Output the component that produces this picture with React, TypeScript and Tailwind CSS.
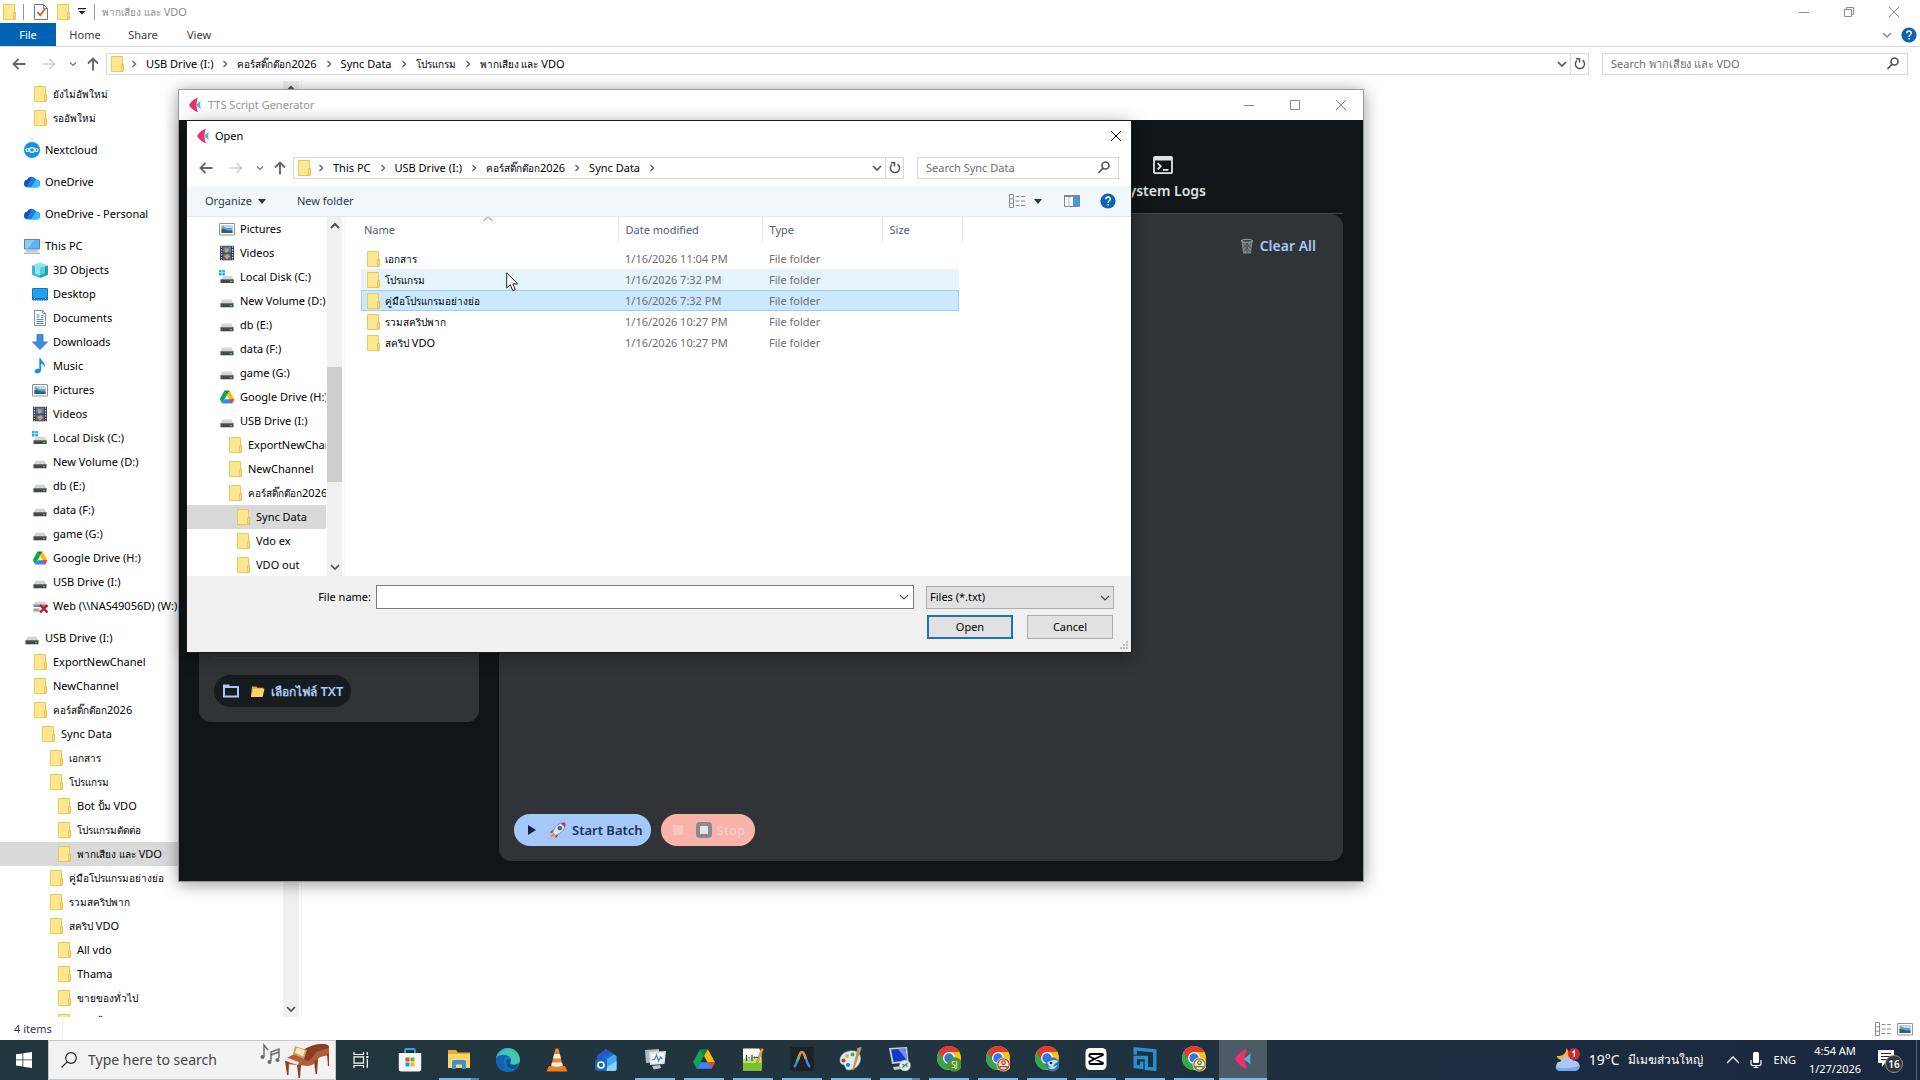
import React from "react";

/* ---------- icons ---------- */

type IconProps = { className?: string };

const Folder = ({ className = "size-4" }: IconProps) => (
  <svg viewBox="0 0 16 16" className={className} aria-hidden="true">
    <path d="M2.500.500h11v15h-11z" fill="#fde891" stroke="#e9c95c" strokeWidth="1" />
    <path d="M12.700 8.500h1.900v6.600h-1.900z" fill="#fbe07a" stroke="#dcb943" strokeWidth=".8" />
  </svg>
);

const Drive = ({ className = "size-4" }: IconProps) => (
  <svg viewBox="0 0 16 16" className={className} aria-hidden="true">
    <path d="M3.500 6.500h9l2 4h-13z" fill="#d3d5d6" />
    <path d="M1.500 10.300h13v4h-13z" fill="#45494b" />
    <path d="M1.500 10.300h13v.8h-13z" fill="#6d7173" />
    <path d="M11 12h1.800v1.200H11z" fill="#4be04b" />
  </svg>
);

const LocalDisk = () => (
  <svg viewBox="0 0 16 16" className="size-4" aria-hidden="true">
    <path d="M0 1h2.600v2.400H0zM3.300 1h2.600v2.400H3.300zM0 4.100h2.600v2.400H0zM3.300 4.100h2.600v2.400H3.300z" fill="#1fb0e6" />
    <path d="M4 7h9l1.700 3.500H2z" fill="#d3d5d6" />
    <path d="M1.500 10.300h13.200v3.700H1.500z" fill="#45494b" />
    <path d="M11 11.700h1.800v1.200H11z" fill="#4be04b" />
  </svg>
);

const NetDrive = () => (
  <svg viewBox="0 0 16 16" className="size-4" aria-hidden="true">
    <path d="M3.500 3.500h9l2 3h-13z" fill="#d3d5d6" />
    <path d="M1.500 6.500h13V9h-13z" fill="#85898b" />
    <path d="M1.500 10.500h6v3h-6z" fill="#9aa0a2" />
    <path d="M8 7l7.500 7.500M15.500 7L8 14.500" stroke="#c31616" strokeWidth="2.400" />
  </svg>
);

const GoogleDrive = ({ className = "size-4" }: IconProps) => (
  <svg viewBox="0 0 16 16" className={className} aria-hidden="true">
    <path d="M5.400 1.500h5.200L8 6z" fill="#188038" />
    <path d="M5.400 1.500L8 6l-5 8.500L.8 10z" fill="#12a652" />
    <path d="M10.600 1.500L8 6l2.400 4.200h4.900z" fill="#fbbc04" />
    <path d="M5.600 10.200h9.700L13 14.500H3z" fill="#3f83f5" />
    <path d="M10.400 10.200h4.900L13 14.500z" fill="#ea4335" />
  </svg>
);

const Nextcloud = () => (
  <svg viewBox="0 0 16 16" className="size-4" aria-hidden="true">
    <circle cx="8" cy="8" r="8" fill="#1a93dd" />
    <g fill="none" stroke="#fff" strokeWidth="1.200">
      <circle cx="8" cy="8" r="2.400" />
      <circle cx="3.600" cy="8" r="1.500" />
      <circle cx="12.400" cy="8" r="1.500" />
    </g>
  </svg>
);

const OneDrive = () => (
  <svg viewBox="0 0 16 16" className="size-4" aria-hidden="true">
    <path d="M1 12.500A4 4 0 013 5.800 5 5 0 0112 5.500a4 4 0 01.500 8H4z" fill="#1f7be8" />
    <path d="M.3 9.500A3.700 3.700 0 013.500 5.600a5 5 0 014-2.700L3 13.200A3.700 3.700 0 01.3 9.500z" fill="#1553c4" />
    <path d="M7 13.500l5-7.500a3.900 3.900 0 013.900 3.900 3.600 3.600 0 01-3.600 3.600z" fill="#3cc0f5" />
  </svg>
);

const ThisPC = () => (
  <svg viewBox="0 0 16 16" className="size-4" aria-hidden="true">
    <path d="M.5 1.500h15v9.500H.5z" fill="#5ab6f7" stroke="#4a87b4" strokeWidth="1" />
    <path d="M1 2h9L4 10.500H1z" fill="#85cdfb" />
    <path d="M2 13h12M0 15.200h16" stroke="#8494a0" strokeWidth="1" />
  </svg>
);

const Objects3D = () => (
  <svg viewBox="0 0 16 16" className="size-4" aria-hidden="true">
    <path d="M0 3.500L8 .3l8 3.200L8 6z" fill="#8fe5ee" />
    <path d="M0 3.500L8 6v10l-8-3.200z" fill="#39b9cb" />
    <path d="M16 3.500L8 6v10l8-3.200z" fill="#1d9eb3" />
    <path d="M3 4.500L8 6v7.500l-5-2z" fill="#8fe5ee" />
    <path d="M13 4.500L8 6v7.500l5-2z" fill="#5accd9" />
  </svg>
);

const DesktopIcon = () => (
  <svg viewBox="0 0 16 16" className="size-4" aria-hidden="true">
    <path d="M.5 2.500h15v11.500H.5z" fill="#1ea0f3" stroke="#1676bf" />
    <path d="M1 12h14v1.500H1z" fill="#1272b8" />
    <path d="M2 12.500h1M13 12.500h1" stroke="#fff" />
  </svg>
);

const DocumentIcon = () => (
  <svg viewBox="0 0 16 16" className="size-4" aria-hidden="true">
    <path d="M2.500.5h8l3 3v12h-11z" fill="#fff" stroke="#8a8f93" />
    <path d="M10.500.5v3h3" fill="none" stroke="#8a8f93" />
    <path d="M4.500 5h3M4.500 7h3M9 5.500h2.500M9 7.500h2.500M4.500 9.500h7M4.500 11.500h7M4.500 13.500h7" stroke="#3c8fb8" />
  </svg>
);

const DownloadIcon = () => (
  <svg viewBox="0 0 16 16" className="size-4" aria-hidden="true">
    <path d="M5 .5h6v7.500h4.500L8 15.500.5 8H5z" fill="#3d8fdb" stroke="#2b74bb" strokeWidth=".8" />
  </svg>
);

const MusicIcon = () => (
  <svg viewBox="0 0 16 16" className="size-4" aria-hidden="true">
    <path d="M7.300.3h1.500c.3 3 4.800 4 4.300 9-.6-1.800-2-3.300-4-3.500v6.500c0 3.500-6.600 4.300-6.600 1 0-2 2.800-3.200 4.800-2.300z" fill="#1d8fe0" />
  </svg>
);

const PictureIcon = () => (
  <svg viewBox="0 0 16 16" className="size-4" aria-hidden="true">
    <path d="M.5 2.500h15v11.500H.5z" fill="#fff" stroke="#8e9499" />
    <path d="M2.500 4.500h11V12h-11z" fill="#5aa5d8" />
    <path d="M2.500 4.500h11v2.500h-6z" fill="#b8dcf2" />
    <path d="M2.500 8c3-.5 6 2 11 1.500V12h-11z" fill="#3b5d68" />
  </svg>
);

const VideoIcon = () => (
  <svg viewBox="0 0 16 16" className="size-4" aria-hidden="true">
    <path d="M1 .8h14v14.500H1z" fill="#3a3a3a" />
    <path d="M4 1.500h8v6H4z" fill="#4d7fcc" />
    <path d="M4 8.500h8v6.300H4z" fill="#4468b0" />
    <path d="M6 3l4 1-1.500 3.500H6zM5 11l4-2 2 2.500-3 2.800z" fill="#d9a33a" />
    <path d="M2.500 1.500v14M13.500 1.500v14" stroke="#eee" strokeWidth="1.200" strokeDasharray="1.300 1.300" />
  </svg>
);

const FishLogo = ({ className = "size-4" }: IconProps) => (
  <svg viewBox="-1.500 0 16 16" className={className} aria-hidden="true">
    <path d="M9.600.8c-2 3.500-2.200 10.500 0 14.400C5 14 2 10.500.5 8 2 5.500 5 2 9.600.8z" fill="#ee2f6a" />
    <path d="M7.200 8l5-4.200c-.6 2.700-.6 5.700 0 8.400z" fill="#4db3e0" />
  </svg>
);

const Stroke = ({ d, className = "size-4", w = 1 }: IconProps & { d: string; w?: number }) => (
  <svg viewBox="0 0 16 16" className={className} fill="none" stroke="currentColor" strokeWidth={w} aria-hidden="true">
    <path d={d} />
  </svg>
);

const CrumbArrow = () => <Stroke d="M6.500 5l3 3-3 3" w={1.500} className="size-4 shrink-0 text-[#6b6b6b]" />;
const ChevronDown = ({ className = "size-4" }: IconProps) => <Stroke d="M4 6l4 4 4-4" w={1.600} className={className} />;
const BackArrow = () => <Stroke d="M14.500 8H2.500M7.500 3l-5 5 5 5" w={1.800} />;
const ForwardArrow = () => <Stroke d="M1.500 8h12M8.500 3l5 5-5 5" w={1.600} />;
const UpArrow = () => <Stroke d="M8 14.500V2.500M3 7.500l5-5 5 5" w={1.900} />;
const CloseX = ({ className }: IconProps) => <Stroke d="M3 3l10 10M13 3L3 13" className={className} />;
const Minimize = () => <Stroke d="M3 8.500h10" />;
const Maximize = () => <Stroke d="M3.500 3.500h9v9h-9z" />;
const Restore = () => <Stroke d="M3.500 5.500h7v7h-7zM5.500 5.500v-2h7v7h-2" />;
const Refresh = () => <Stroke d="M5 4.500a4.600 4.600 0 105.500-.3M4 2.800h3.500v3.700" w={1.500} />;
const Magnifier = () => <Stroke d="M13 5.500a3.500 3.500 0 11-7 0 3.500 3.500 0 017 0zM7 8.200L2.500 13" w={1.700} />;

const Help = () => (
  <svg viewBox="0 0 16 16" className="size-4" aria-hidden="true">
    <circle cx="8" cy="8" r="7.600" fill="#0a63b4" />
    <path d="M5.800 6.300c0-3 4.500-3 4.500-.3 0 1.700-2.200 1.800-2.200 3.700M8.100 11v1.600" fill="none" stroke="#fff" strokeWidth="1.500" />
  </svg>
);

const DetailsView = () => (
  <svg viewBox="0 0 18 16" className="h-4 w-[18px]" fill="none" stroke="#8c8c8c" aria-hidden="true">
    <path d="M1.500 1.500h4v13h-4zM1.500 5.800h4M1.500 10.200h4" />
    <path d="M7.500 3.500h4M13 3.500h4M7.500 8h4M13 8h4M7.500 12.500h4M13 12.500h4" />
  </svg>
);

/* ---------- text ---------- */

/* Thai runs are set one step smaller than the Latin text beside them. */
const Label = ({ text }: { text: string }) => (
  <span className="whitespace-pre">
    {text.split(/([\u0E00-\u0E7F]+)/).map((part, i) =>
      i % 2 ? <span key={i} lang="th" className="text-[10px]">{part}</span> : part,
    )}
  </span>
);

/* ---------- navigation tree ---------- */

type Node = { label: string; icon: () => React.ReactElement; level: number; gap?: boolean; selected?: boolean };
const F = () => <Folder />;
const D = () => <Drive />;
const G = () => <GoogleDrive />;

const explorerTree: Node[] = [
  { label: "ยังไม่อัพใหม่", icon: F, level: 1 },
  { label: "รออัพใหม่", icon: F, level: 1 },
  { label: "Nextcloud", icon: Nextcloud, level: 0, gap: true },
  { label: "OneDrive", icon: OneDrive, level: 0, gap: true },
  { label: "OneDrive - Personal", icon: OneDrive, level: 0, gap: true },
  { label: "This PC", icon: ThisPC, level: 0, gap: true },
  { label: "3D Objects", icon: Objects3D, level: 1 },
  { label: "Desktop", icon: DesktopIcon, level: 1 },
  { label: "Documents", icon: DocumentIcon, level: 1 },
  { label: "Downloads", icon: DownloadIcon, level: 1 },
  { label: "Music", icon: MusicIcon, level: 1 },
  { label: "Pictures", icon: PictureIcon, level: 1 },
  { label: "Videos", icon: VideoIcon, level: 1 },
  { label: "Local Disk (C:)", icon: LocalDisk, level: 1 },
  { label: "New Volume (D:)", icon: D, level: 1 },
  { label: "db (E:)", icon: D, level: 1 },
  { label: "data (F:)", icon: D, level: 1 },
  { label: "game (G:)", icon: D, level: 1 },
  { label: "Google Drive (H:)", icon: G, level: 1 },
  { label: "USB Drive (I:)", icon: D, level: 1 },
  { label: "Web (\\\\NAS49056D) (W:)", icon: NetDrive, level: 1 },
  { label: "USB Drive (I:)", icon: D, level: 0, gap: true },
  { label: "ExportNewChanel", icon: F, level: 1 },
  { label: "NewChannel", icon: F, level: 1 },
  { label: "คอร์สติ๊กต๊อก2026", icon: F, level: 1 },
  { label: "Sync Data", icon: F, level: 2 },
  { label: "เอกสาร", icon: F, level: 3 },
  { label: "โปรแกรม", icon: F, level: 3 },
  { label: "Bot ปั้ม VDO", icon: F, level: 4 },
  { label: "โปรแกรมตัดต่อ", icon: F, level: 4 },
  { label: "พากเสียง และ VDO", icon: F, level: 4, selected: true },
  { label: "คู่มือโปรแกรมอย่างย่อ", icon: F, level: 3 },
  { label: "รวมสคริปพาก", icon: F, level: 3 },
  { label: "สคริป VDO", icon: F, level: 3 },
  { label: "All vdo", icon: F, level: 4 },
  { label: "Thama", icon: F, level: 4 },
  { label: "ขายของทั่วไป", icon: F, level: 4 },
  { label: "คลิปสั้น", icon: F, level: 4 },
];

const dialogTree: Node[] = [
  { label: "Pictures", icon: PictureIcon, level: 1 },
  { label: "Videos", icon: VideoIcon, level: 1 },
  { label: "Local Disk (C:)", icon: LocalDisk, level: 1 },
  { label: "New Volume (D:)", icon: D, level: 1 },
  { label: "db (E:)", icon: D, level: 1 },
  { label: "data (F:)", icon: D, level: 1 },
  { label: "game (G:)", icon: D, level: 1 },
  { label: "Google Drive (H:)", icon: G, level: 1 },
  { label: "USB Drive (I:)", icon: D, level: 1 },
  { label: "ExportNewChanel", icon: F, level: 2 },
  { label: "NewChannel", icon: F, level: 2 },
  { label: "คอร์สติ๊กต๊อก2026", icon: F, level: 2 },
  { label: "Sync Data", icon: F, level: 3, selected: true },
  { label: "Vdo ex", icon: F, level: 3 },
  { label: "VDO out", icon: F, level: 3 },
];

const indent = ["pl-6", "pl-8", "pl-10", "pl-12", "pl-14"];

const Tree = ({ items, label }: { items: Node[]; label: string }) => (
  <ul aria-label={label} className="min-w-0 flex-1 overflow-hidden">
    {items.map((n, i) => (
      <li key={i} className={n.gap ? "pt-2" : ""}>
        <button
          type="button"
          className={`flex h-6 w-full items-center gap-[5px] text-left whitespace-nowrap ${indent[n.level]} ${n.selected ? "bg-[#d9d9d9]" : ""}`}
        >
          <span className="shrink-0"><n.icon /></span>
          <Label text={n.label} />
        </button>
      </li>
    ))}
  </ul>
);

/* ---------- address bar ---------- */

const AddressBar = ({ crumbs, search, className, trailing, searchWidth }: {
  crumbs: string[]; search: string; className: string; trailing?: boolean; searchWidth: string;
}) => (
  <div className={`flex items-center pr-3 pl-[11px] ${className}`}>
    <button type="button" aria-label="Back" className="text-[#666]"><BackArrow /></button>
    <button type="button" aria-label="Forward" className="ml-3.5 text-[#cfcfcf]"><ForwardArrow /></button>
    <button type="button" aria-label="Recent locations" className="ml-2.5 text-[#777]"><ChevronDown className="size-3" /></button>
    <button type="button" aria-label="Up" className="ml-1.5 text-[#666]"><UpArrow /></button>
    <div className="ml-[5px] flex h-[22px] min-w-0 flex-1 items-center border border-[#d9d9d9] bg-white pl-0.5">
      <Folder />
      <ol className="flex min-w-0 flex-1 items-center overflow-hidden whitespace-nowrap">
        {crumbs.map((c, i) => (
          <li key={c} className="flex items-center">
            <span className={i ? "px-1" : "pr-1 pl-px"}><CrumbArrow /></span>
            <button type="button" className="leading-5"><Label text={c} /></button>
          </li>
        ))}
        {trailing && <li className="px-1"><CrumbArrow /></li>}
      </ol>
      <button type="button" aria-label="Previous locations" className="text-[#555]"><ChevronDown /></button>
      <button type="button" aria-label="Refresh" className="flex h-full w-[18px] items-center justify-center border-l border-[#d9d9d9] text-[#555]">
        <Refresh />
      </button>
    </div>
    <label className={`ml-[13px] flex h-[22px] shrink-0 items-center border border-[#d9d9d9] bg-white pr-1.5 pl-2 text-[#555] ${searchWidth}`}>
      <input type="text" aria-label={search} placeholder={search} className="min-w-0 flex-1 outline-none placeholder:text-[#6d6d6d]" />
      <Magnifier />
    </label>
  </div>
);

/* ---------- open dialog ---------- */

const hovered = "bg-[#e5f3fb]";
const chosen =
  "bg-[#cce8ff] shadow-[inset_0_1px_#99d1f5,inset_0_-1px_#99d1f5] first:shadow-[inset_0_1px_#99d1f5,inset_0_-1px_#99d1f5,inset_1px_0_#99d1f5] last:shadow-[inset_0_1px_#99d1f5,inset_0_-1px_#99d1f5,inset_-1px_0_#99d1f5]";

const files = [
  { name: "เอกสาร", date: "1/16/2026 11:04 PM", cell: "" },
  { name: "โปรแกรม", date: "1/16/2026 7:32 PM", cell: hovered },
  { name: "คู่มือโปรแกรมอย่างย่อ", date: "1/16/2026 7:32 PM", cell: chosen },
  { name: "รวมสคริปพาก", date: "1/16/2026 10:27 PM", cell: "" },
  { name: "สคริป VDO", date: "1/16/2026 10:27 PM", cell: "" },
];

const OpenDialog = () => (
  <section
    role="dialog"
    aria-label="Open"
    className="absolute top-[121px] left-[187px] flex w-[944px] flex-col bg-white shadow-[0_3px_18px_rgba(0,0,0,0.4)] outline outline-1 outline-[#1c1c1c]"
  >
    <header className="flex h-[30px] items-center pr-[7px] pl-2">
      <FishLogo />
      <h2 className="ml-1 flex-1">Open</h2>
      <button type="button" aria-label="Close"><CloseX className="size-4 text-black" /></button>
    </header>
    <AddressBar
      className="h-[35px] pb-px"
      crumbs={["This PC", "USB Drive (I:)", "คอร์สติ๊กต๊อก2026", "Sync Data"]}
      search="Search Sync Data"
      trailing
      searchWidth="w-[202px]"
    />
    <div className="flex h-[31px] items-center border-b border-[#e3e8ee] bg-[#f4f7f9] pr-[15px] pl-[18px] text-[#1e395b]">
      <button type="button" className="flex items-center gap-1.5">
        Organize
        <svg viewBox="0 0 8 5" className="h-[5px] w-2" aria-hidden="true"><path d="M0 0h8L4 5z" fill="#1e395b" /></svg>
      </button>
      <button type="button" className="ml-[31px] flex-1 text-left">New folder</button>
      <button type="button" aria-label="Change your view" className="flex items-center gap-2">
        <DetailsView />
        <svg viewBox="0 0 8 5" className="h-[5px] w-2" aria-hidden="true"><path d="M0 0h8L4 5z" fill="#1e395b" /></svg>
      </button>
      <button type="button" aria-label="Show the preview pane" className="ml-[22px]">
        <svg viewBox="0 0 16 12" className="h-3 w-4" aria-hidden="true">
          <path d="M.5.500h15v11H.5z" fill="#fff" stroke="#7d8a96" />
          <path d="M0 0h16v2H0z" fill="#7d8a96" />
          <path d="M5 2v9.500" stroke="#a9b3bb" />
          <path d="M9 2h6v9H9z" fill="#3d9be0" />
        </svg>
      </button>
      <button type="button" aria-label="Get help" className="ml-5"><Help /></button>
    </div>
    <div className="flex h-[359px] overflow-hidden">
      <div className="flex w-[139px]"><Tree items={dialogTree} label="Folders" /></div>
      <div className="ml-px flex w-[15px] flex-col items-center bg-[#f0f0f0] py-px text-[#505050]">
        <Stroke d="M4 10l4-4 4 4" w={2} className="size-4" />
        <div className="mt-[133px] h-[115px] w-[15px] bg-[#cdcdcd]" />
        <ChevronDown className="mt-auto size-4" />
      </div>
      <div className="ml-0.5 flex-1 border-l border-[#f5f5f5]">
        <table className="ml-4 table-fixed border-collapse text-left">
          <colgroup>
            <col className="w-[257px]" />
            <col className="w-36" />
            <col className="w-[120px]" />
            <col className="w-[77px]" />
            <col className="w-[3px]" />
          </colgroup>
          <thead>
            <tr className="h-[26px] text-[#4c607a]">
              <th scope="col" className="relative border-r border-[#e5e5e5] pl-[3px] font-normal">
                Name
                <Stroke d="M3.500 10L8 5.500l4.500 4.500" className="absolute -top-1.5 left-[119px] size-4 text-[#777]" />
              </th>
              <th scope="col" className="border-r border-[#e5e5e5] pl-[7px] font-normal">Date modified</th>
              <th scope="col" className="border-r border-[#e5e5e5] pl-[7px] font-normal">Type</th>
              <th scope="col" colSpan={2} className="border-r border-[#e5e5e5] pl-[7px] font-normal">Size</th>
            </tr>
          </thead>
          <tbody className="before:block before:h-[5px] before:content-['']">
            {files.map((f) => (
              <tr key={f.name} className="h-[21px] text-[#6d6d6d]">
                <td className={`p-0 pl-1 text-black ${f.cell}`}>
                  <span className="flex items-center gap-1"><Folder /><Label text={f.name} /></span>
                </td>
                <td className={`p-0 pl-[7px] ${f.cell}`}>{f.date}</td>
                <td className={`p-0 pl-[7px] ${f.cell}`}>File folder</td>
                <td className={`p-0 ${f.cell}`} />
              </tr>
            ))}
          </tbody>
        </table>
      </div>
    </div>
    <footer className="flex flex-col items-end gap-1.5 bg-[#f0f0f0] pt-[9px] pr-[17px] pb-[13px]">
      <div className="flex items-center">
        <label htmlFor="file-name" className="mr-[5px]">File name:</label>
        <div className="flex h-6 w-[538px] items-center border border-[#7a7a7a] bg-white pr-px text-[#555]">
          <input id="file-name" type="text" className="min-w-0 flex-1 px-1 text-black outline-none" />
          <Stroke d="M4 6l4 4 4-4" w={1.200} />
        </div>
        <div className="relative ml-3 w-[188px]">
          <select aria-label="File type" className="h-[23px] w-full appearance-none border border-[#adadad] bg-[#e1e1e1] pl-[3px]">
            <option>Files (*.txt)</option>
          </select>
          <Stroke d="M4 6l4 4 4-4" w={1.200} className="pointer-events-none absolute top-1 right-px size-4 text-[#444]" />
        </div>
      </div>
      <div className="mr-px flex gap-3.5">
        <button type="button" className="h-6 w-[86px] border-2 border-[#1a73b8] bg-[#e1e1e1]">Open</button>
        <button type="button" className="h-6 w-[86px] border border-[#adadad] bg-[#e1e1e1]">Cancel</button>
      </div>
    </footer>
    <svg viewBox="0 0 9 9" className="absolute right-0.5 bottom-0.5 size-[9px]" aria-hidden="true">
      <path d="M6 0h2v2H6zM3 3h2v2H3zM6 3h2v2H6zM0 6h2v2H0zM3 6h2v2H3zM6 6h2v2H6z" fill="#bdbdbd" />
    </svg>
  </section>
);

/* ---------- script generator window ---------- */

const AppWindow = () => (
  <section
    aria-label="TTS Script Generator"
    className="absolute top-[89px] left-[178px] flex h-[793px] w-[1186px] flex-col border border-[#9a9a9a] bg-[#101518] shadow-[0_2px_16px_rgba(0,0,0,0.4)]"
  >
    <header className="flex h-[30px] shrink-0 items-center bg-white pr-3.5 pl-2 text-[#999]">
      <FishLogo />
      <h1 className="ml-[5px] flex-1">TTS Script Generator</h1>
      <div className="flex gap-[30px] text-[#888]">
        <button type="button" aria-label="Minimize"><Minimize /></button>
        <button type="button" aria-label="Maximize"><Maximize /></button>
        <button type="button" aria-label="Close"><CloseX className="size-4" /></button>
      </div>
    </header>
    <nav className="mx-5 flex h-[94px] shrink-0 justify-end border-b border-[#41474c] pr-[137px]">
      <button type="button" className="mt-9 flex h-11 flex-col items-center justify-between text-sm leading-[18px] font-semibold text-[#dfe3e6]">
        <svg viewBox="0 0 24 20" className="h-[18px] w-[22px]" aria-hidden="true">
          <path d="M3 0h18a2 2 0 012 2v16a2 2 0 01-2 2H3a2 2 0 01-2-2V2a2 2 0 012-2z" fill="#dfe3e6" />
          <path d="M3 5h18v13H3z" fill="#101518" />
          <path d="M6 8l3.500 3.500L6 15M12 15.500h6" fill="none" stroke="#dfe3e6" strokeWidth="2" />
        </svg>
        System Logs
      </button>
    </nav>
    <div className="flex min-h-0 flex-1 items-start gap-5 px-5 pb-5">
      <aside className="flex h-[508px] w-[280px] flex-col justify-end rounded-xl bg-[#303437] p-[15px]">
        <div className="mb-[17px] h-px bg-[#393d40]" />
        <button type="button" className="flex h-8 items-center self-start rounded-full bg-[#171c1f] px-2 text-[13px] font-semibold text-[#a8c8f5]">
          <svg viewBox="0 0 18 14" className="h-3.5 w-[18px]" fill="none" stroke="#a8c8f5" strokeWidth="2" aria-hidden="true">
            <path d="M2 3h14v9.500H2z" />
            <path d="M1 2h6.500" strokeWidth="3" />
          </svg>
          <svg viewBox="0 0 16 14" className="ml-2.5 h-[13px] w-[15px]" aria-hidden="true">
            <path d="M2 1.500h5l1 1.500h6.500L13 12.500H1z" fill="#e8a83a" />
            <path d="M3.500 4h12L13.500 13H1z" fill="#ffd36c" />
          </svg>
          <span className="ml-1.5"><span lang="th" className="text-xs font-semibold">เลือกไฟล์</span> TXT</span>
        </button>
      </aside>
      <main className="flex h-full flex-1 flex-col items-start justify-between rounded-xl bg-[#303437] p-[15px]">
        <button type="button" className="mt-[7px] mr-3 flex items-center gap-1.5 self-end text-sm font-semibold text-[#a8c8f5]">
          <svg viewBox="0 0 14 16" className="h-4 w-3.5" aria-hidden="true">
            <path d="M1.500 3.500h11L11 15.500H3z" fill="#7c8488" />
            <path d="M3 5l7.500 9M6 4.500l5 6M11 5l-7.500 9M8 4.500l-5 6M7 4v11" stroke="#42484b" strokeWidth=".8" />
            <ellipse cx="7" cy="2.800" rx="6.300" ry="2" fill="#969da1" />
            <ellipse cx="7" cy="2.800" rx="4.500" ry="1" fill="#3b4144" />
          </svg>
          Clear All
        </button>
        <div className="flex gap-2.5 text-[13px] font-semibold">
          <button type="button" className="flex h-8 items-center rounded-full bg-[#a5c8fb] pr-2 pl-3.5 text-[#15325c]">
            <svg viewBox="0 0 8 10" className="h-2.5 w-2" aria-hidden="true"><path d="M0 0l8 5-8 5z" fill="#10253f" /></svg>
            <svg viewBox="0 0 18 18" className="ml-[13px] size-[17px]" aria-hidden="true">
              <path d="M4 8L1 11l3 .5zM10 14l-3 3-.5-3z" fill="#c9252d" />
              <path d="M17 1c-4-.5-8 1-11 5.500L3.800 11 7 14.200 11.500 12C16 9 17.500 5 17 1z" fill="#dfe6ee" stroke="#6b7b8f" strokeWidth=".8" />
              <path d="M17 1c-1.500-.2-3 0-4.500.5l4 4C17 4 17.200 2.500 17 1z" fill="#d23038" />
              <circle cx="11.500" cy="6.500" r="2" fill="#2e7bbd" stroke="#44525f" strokeWidth=".8" />
              <path d="M4.500 12l1.700 1.700C5 15.500 3 16 1.500 16.500 2 15 2.500 13 4.500 12z" fill="#f28b20" />
            </svg>
            <span className="ml-1.5">Start Batch</span>
          </button>
          <button type="button" disabled className="flex h-8 items-center rounded-full bg-[#f9b3ab] pr-2.5 pl-3 text-[#f2ccc7]">
            <span className="size-2.5 bg-[#f6c6c0]" />
            <span className="ml-[13px] flex size-4 items-center justify-center rounded-sm bg-[#8c8890]"><span className="size-2 bg-[#e6e1e4]" /></span>
            <span className="ml-[5px]">Stop</span>
          </button>
        </div>
      </main>
    </div>
  </section>
);

/* ---------- taskbar ---------- */

const Chrome = ({ children }: { children: React.ReactNode }) => (
  <svg viewBox="0 0 24 26" className="h-[26px] w-6" aria-hidden="true">
    <circle cx="12" cy="12" r="12" fill="#fbc116" />
    <path d="M12 12H12L1.600 6a12 12 0 009.400 18l5-8z" fill="#2da94f" />
    <path d="M12 6h10.400A12 12 0 001.600 6L7 15z" fill="#e33b2e" />
    <circle cx="12" cy="12" r="6" fill="#fff" />
    <circle cx="12" cy="12" r="4.700" fill="#3277e8" />
    {children}
  </svg>
);

const Person = ({ bg, line }: { bg: string; line: string }) => (
  <g>
    <circle cx="17.500" cy="18.500" r="7" fill={bg} />
    <circle cx="17.500" cy="18.500" r="5.700" fill="none" stroke={line} strokeWidth="1.200" />
    <circle cx="17.500" cy="16.700" r="1.800" fill="none" stroke={line} strokeWidth="1.300" />
    <path d="M14 22v-1.300h7V22" fill="none" stroke={line} strokeWidth="1.300" />
  </g>
);

const apps: { name: string; open?: boolean; multi?: boolean; active?: boolean; icon: React.ReactElement }[] = [
  {
    name: "Task View",
    icon: (
      <svg viewBox="0 0 16 16" className="size-4" fill="none" stroke="#fff" strokeWidth="1.200" aria-hidden="true">
        <path d="M1 0v2.500h9.500V0M1 16v-2.500h9.500V16M1 4.800h9.500v6.400H1zM14.300 0v3M14.300 7v9" />
        <path d="M13.200 4h2.200v2.200h-2.200z" fill="#fff" stroke="none" />
      </svg>
    ),
  },
  {
    name: "Microsoft Store",
    icon: (
      <svg viewBox="0 0 24 24" className="size-6" aria-hidden="true">
        <path d="M7 5V2.500A1.500 1.500 0 018.500 1h7A1.500 1.500 0 0117 2.500V5" fill="none" stroke="#2fa8e8" strokeWidth="1.800" />
        <path d="M.8 5h22.400v16a2.500 2.500 0 01-2.500 2.500H3.300A2.500 2.500 0 01.8 21z" fill="#f4f6f7" />
        <path d="M7.500 9.500h4v4h-4z" fill="#e8502a" /><path d="M12.500 9.500h4v4h-4z" fill="#7db51c" />
        <path d="M7.500 14.500h4v4h-4z" fill="#1a9fe3" /><path d="M12.500 14.500h4v4h-4z" fill="#fbb813" />
      </svg>
    ),
  },
  {
    name: "File Explorer", open: true, multi: true,
    icon: (
      <svg viewBox="0 0 24 24" className="size-6" aria-hidden="true">
        <path d="M1 3h8l2 2.500h12V20H1z" fill="#e9a934" />
        <path d="M1 7h22v14H1z" fill="#fdd568" />
        <path d="M5 22v-7a2 2 0 012-2h10a2 2 0 012 2v7h-4v-4.500H9V22z" fill="#3c8fdc" />
      </svg>
    ),
  },
  {
    name: "Microsoft Edge",
    icon: (
      <svg viewBox="0 0 24 24" className="size-6" aria-hidden="true">
        <circle cx="12" cy="12" r="12" fill="#1478cd" />
        <path d="M.2 10A12 12 0 0124 11.500c0 3.500-3 5.500-6.500 5.300-3.500-.2-4-1.500-3-2.800C16.500 10 13 7 9 7.500 5 8 1.500 10 .2 10z" fill="#40c9a8" />
        <path d="M.2 10A12 12 0 0114 .2C8 2 3 5 .2 10z" fill="#37a9e0" />
        <path d="M8.500 11c-1.500 3 0 10.500 8 11.700A12 12 0 01.3 9.500C3 6.500 9 5.800 12 8.500 10.500 8.800 9.300 9.500 8.500 11z" fill="#1263b5" />
        <path d="M14.500 14c-1 1.300-.5 2.700 3 2.800 2 .1 4-.5 5.300-1.800-.8 2.500-2 4.300-3.600 5.800-7 1.500-10.500-3.800-8.200-9.300 1-1.700 4-.2 3.500 2.500z" fill="#1b4f8a" />
      </svg>
    ),
  },
  {
    name: "VLC media player",
    icon: (
      <svg viewBox="0 0 24 24" className="size-6" aria-hidden="true">
        <path d="M4 18h16l2.500 5.500h-21z" fill="#ee7c1a" />
        <path d="M10.500.5h3L18 19c-2 2-10 2-12 0z" fill="#f4831f" />
        <path d="M9.200 6h5.600l1.200 4.500H8zM7 14.500h10l.8 3c-2 1.500-9.800 1.500-11.600 0z" fill="#f2f0ee" />
      </svg>
    ),
  },
  {
    name: "Outlook",
    icon: (
      <svg viewBox="0 0 24 24" className="size-6" aria-hidden="true">
        <path d="M12 1l10.500 7v13a2 2 0 01-2 2H6V6z" fill="#1a6fd6" />
        <path d="M12 1L3 7.500v6L17 5z" fill="#2a56c6" />
        <path d="M20 6.500L5 16v7h15.500a2 2 0 002-2V8z" fill="#3fa9f5" />
        <path d="M22.500 13L7 23h13.500a2 2 0 002-2z" fill="#8dd2ff" />
        <rect x="1" y="11" width="12" height="12" rx="2" fill="#1564c0" />
        <circle cx="7" cy="17" r="3" fill="none" stroke="#fff" strokeWidth="1.700" />
      </svg>
    ),
  },
  {
    name: "Process monitor", open: true,
    icon: (
      <svg viewBox="0 0 24 24" className="size-6" aria-hidden="true">
        <path d="M2 3l14-1v13l-13 1z" fill="#b5babd" />
        <path d="M6 5l17-1-1.500 13L7 18z" fill="#dfe4e7" />
        <path d="M8 7l13-1-1 9.500-11 1z" fill="#f5fbff" />
        <path d="M9 13l3-1 1.500-4 2 6 2-4 2 2" fill="none" stroke="#3a86c8" strokeWidth="1.200" />
        <path d="M9 19l8-1 1 3-7 1.500z" fill="#c2c6c8" />
      </svg>
    ),
  },
  { name: "Google Drive", open: true, icon: <GoogleDrive className="size-6" /> },
  {
    name: "Notepad++", open: true,
    icon: (
      <svg viewBox="0 0 24 24" className="size-6" aria-hidden="true">
        <path d="M2 1.500h16l2.500 3V23.500H2z" fill="#fafdf4" />
        <path d="M2 12h18.500v11.500H2z" fill="#79c425" />
        <path d="M2 12h18.500v4H2z" fill="#b9e07a" />
        <path d="M5.500 8v6M8 10v1.500M11 8v6M13.500 9.500v2M12.500 10.500h5" stroke="#333" strokeWidth="1.200" />
        <path d="M20.500 1l2 1.500L17 15.500l-1.500 1 .3-2.500z" fill="#f0a92b" stroke="#9a6b1d" strokeWidth=".5" />
      </svg>
    ),
  },
  {
    name: "Antigravity", open: true,
    icon: (
      <svg viewBox="0 0 24 24" className="size-6" aria-hidden="true">
        <path d="M0 0h24v24H0z" fill="#1e2225" />
        <path d="M4 20C8 17 8.500 5 12 5s4 12 8 15" fill="none" stroke="#3a86f0" strokeWidth="2.500" />
        <path d="M8.300 12C9.300 8 10.200 5 12 5s2.700 3 3.700 7" fill="none" stroke="#e58a45" strokeWidth="2.500" />
        <path d="M7.500 14l1.500-5" stroke="#4cbf6b" strokeWidth="2.500" />
      </svg>
    ),
  },
  {
    name: "Paint", open: true,
    icon: (
      <svg viewBox="0 0 24 24" className="size-6" aria-hidden="true">
        <path d="M11 4c6-1 11 2 10.500 8S17 22 10 23c-4 .3-3-3.500-5-5-2.500-1-4.500-2-4-6C2 7 6 4.800 11 4z" fill="#d8ecf6" stroke="#8fb3c4" strokeWidth=".6" />
        <circle cx="8" cy="9" r="2" fill="#e7b528" /><circle cx="13.500" cy="7.500" r="2" fill="#55a73a" />
        <circle cx="4.500" cy="13.500" r="2" fill="#c63a2c" /><circle cx="9" cy="18" r="2" fill="#3a72c9" />
        <path d="M22.500.5l-2 6L15 23l-1.800 0L17.500 6 18.500 1z" fill="#d98a3c" />
        <path d="M18.500 1l4-1-1.500 6-3.500-.5z" fill="#b59a72" />
      </svg>
    ),
  },
  {
    name: "Remote Desktop", open: true, multi: true,
    icon: (
      <svg viewBox="0 0 24 24" className="size-6" aria-hidden="true">
        <path d="M1 1l18-1 1.500 15L4 17z" fill="#cdd2d8" />
        <path d="M3 2.500l14.500-1L19 13.500 5.500 15z" fill="#1737c9" />
        <path d="M10 2l7.500-.5L19 13.500z" fill="#6f8cf2" />
        <path d="M5 20l8-1 1 3-8 1z" fill="#c5cacd" />
        <circle cx="17" cy="18.500" r="5.500" fill="#e4e9e6" stroke="#a3aba6" strokeWidth=".6" />
        <path d="M14.500 17l2 1.500-2 2M19.500 16l-2 2 2 1.500" fill="none" stroke="#2f8c3a" strokeWidth="1.200" />
      </svg>
    ),
  },
  {
    name: "Chrome SJ", open: true,
    icon: (
      <Chrome>
        <circle cx="17.500" cy="18.500" r="7.300" fill="#4b932b" />
        <text x="17.500" y="21.500" textAnchor="middle" fontSize="8" fill="#fff">SJ</text>
      </Chrome>
    ),
  },
  { name: "Chrome", open: true, icon: <Chrome><Person bg="#f6e6dc" line="#b0431f" /></Chrome> },
  {
    name: "Chrome", open: true,
    icon: (
      <Chrome>
        <circle cx="17.500" cy="18.500" r="7" fill="#2f78b8" />
        <path d="M12 17c3-3 8-4 11-2-1 2-3 2-4 4s-3 3-5 1z" fill="#bfe0f5" />
        <path d="M13 21c3 1 6 0 9-2-1 4-6 6-9 2z" fill="#e5eef3" />
        <circle cx="16" cy="17" r="1.200" fill="#123" />
      </Chrome>
    ),
  },
  {
    name: "CapCut", open: true,
    icon: (
      <svg viewBox="0 0 24 24" className="size-6" aria-hidden="true">
        <rect x="1.500" y="1" width="21" height="22" rx="4.500" fill="#fff" />
        <path d="M19 8.500V8a1 1 0 00-1-1H6.500a1 1 0 00-1 1v1.500L19 16M19 15.500v.5a1 1 0 01-1 1H6.500a1 1 0 01-1-1v-1.500L19 8" fill="none" stroke="#000" strokeWidth="1.900" />
      </svg>
    ),
  },
  {
    name: "Wondershare", open: true,
    icon: (
      <svg viewBox="0 0 24 24" className="size-6" fill="none" stroke="#2790cf" strokeWidth="3.400" aria-hidden="true">
        <path d="M2.200 7.500V1.900l19.600 1.900v18.300L12 21.200M.5 10.500h12.800v12M2.200 10v9.500l6.500.8v-5.800" />
      </svg>
    ),
  },
  { name: "Chrome", open: true, icon: <Chrome><Person bg="#f1ecc9" line="#7d7635" /></Chrome> },
  { name: "TTS Script Generator", open: true, active: true, icon: <FishLogo className="size-[22px]" /> },
];

const Taskbar = () => (
  <footer className="flex h-10 shrink-0 items-stretch bg-linear-to-r from-[#22373d] via-[#21343f] to-[#19273f] text-white">
    <button type="button" aria-label="Start" className="flex w-12 items-center justify-center">
      <svg viewBox="0 0 16 16" className="size-4" fill="#fff" aria-hidden="true">
        <path d="M0 2.300l6.500-.9v6.100H0zM7.300 1.300L16 0v7.500H7.300zM0 8.300h6.500v6.200L0 13.600zM7.300 8.300H16V16l-8.700-1.300z" />
      </svg>
    </button>
    <label className="flex w-[288px] items-center border border-[#c4c8ca] bg-[#f2f2f2] pr-1 pl-3 text-[#222]">
      <svg viewBox="0 0 16 16" className="size-4" fill="none" stroke="#222" strokeWidth="1.200" aria-hidden="true">
        <circle cx="10" cy="6" r="5.300" /><path d="M6.200 9.800L.5 15.500" />
      </svg>
      <input type="text" aria-label="Type here to search" placeholder="Type here to search" className="ml-[11px] min-w-0 flex-1 text-sm outline-none placeholder:text-[#444]" />
      <svg viewBox="0 0 72 38" className="h-[38px] w-[72px] shrink-0" aria-hidden="true">
        <g fill="none" stroke="#666a6d" strokeWidth="1.400">
          <path d="M5 16V4l4 5M12 20V11l8-3v9M12 14l8-3" />
        </g>
        <g fill="#666a6d"><circle cx="3.500" cy="16" r="2" /><circle cx="10.500" cy="21" r="2" /><circle cx="18.500" cy="19" r="2" /></g>
        <path d="M26 18l11-6 13-6c8-4 20-4 20 0v8c-3 1-9 1-11 4s-4 6-10 7l-22-2z" fill="#b55c3a" />
        <path d="M37 12l13-6c8-4 20-4 20 0-2 3-10 2-13 6s-5 7-9 8z" fill="#8a3f26" />
        <path d="M26 16l14 5-1 3-13-4z" fill="#f1e8dc" />
        <path d="M36 5l12 4-3 9-11-5z" fill="#caa35a" /><path d="M38 6.500l8 3-2 6-8-4z" fill="#f3e6c4" />
        <path d="M26 20l2 14h1.500l.5-13zM38 24l1.500 13H41l1-13zM55 20l1.500 13H58l1-15zM68 13l1 12h1V13z" fill="#8a3f26" />
      </svg>
    </label>
    <div className="ml-px flex gap-px">
      {apps.map((a, i) => (
        <button
          key={i}
          type="button"
          aria-label={a.name}
          className={`flex h-10 w-12 flex-col items-center ${a.active ? "bg-[#4d5b66]" : ""}`}
        >
          <span className="flex flex-1 items-center">{a.icon}</span>
          {a.open && (
            <span className={`flex h-0.5 ${a.active ? "w-12" : "w-10"}`}>
              <span className="flex-1 bg-[#76b9ed]" />
              {a.multi && <span className="w-2 bg-[#4f86ae]" />}
            </span>
          )}
        </button>
      ))}
    </div>
    <div className="ml-auto flex items-center">
      <button type="button" className="flex items-center text-sm">
        <svg viewBox="0 0 26 26" className="size-[26px]" aria-hidden="true">
          <path d="M11 1c1 5-3 8.500-9.500 8C4 15 13 15 15 8 14 5 12.500 2.500 11 1z" fill="#f6b23c" />
          <path d="M5 24a4.800 4.800 0 01.5-9.500 7 7 0 0113-.8A5.200 5.200 0 0120 24z" fill="#a9c8f5" />
          <path d="M5 24a4.800 4.800 0 01-4.500-4C8 22 18 22 25 18a5.300 5.300 0 01-5 6z" fill="#7da6ea" />
          <circle cx="19" cy="7" r="6" fill="#cf2b2b" />
          <path d="M17.500 5.500L19.300 4v6" fill="none" stroke="#fff" strokeWidth="1.300" />
        </svg>
        <span className="ml-2">19°C</span>
        <span lang="th" className="ml-2 text-xs">มีเมฆส่วนใหญ่</span>
      </button>
      <button type="button" aria-label="Show hidden icons" className="ml-[22px]"><Stroke d="M2 11l6-6 6 6" w={1.300} /></button>
      <button type="button" aria-label="Microphone" className="ml-[7px]">
        <svg viewBox="0 0 16 16" className="size-4" aria-hidden="true">
          <rect x="5" y="0" width="6" height="11" rx="1.500" fill="#fff" />
          <path d="M3 8v3.500c0 1.500 1 2 2 2h6c1 0 2-.5 2-2V8M8 13.500v2M5.500 15.500h5" fill="none" stroke="#fff" strokeWidth="1.200" />
        </svg>
      </button>
      <button type="button" className="ml-2.5">ENG</button>
      <button type="button" className="flex w-[78px] flex-col items-center leading-[18px]">
        <span>4:54 AM</span>
        <span>1/27/2026</span>
      </button>
      <button type="button" aria-label="16 new notifications" className="relative mr-[13px] ml-[3px] size-[26px]">
        <svg viewBox="0 0 26 26" className="size-[26px]" aria-hidden="true">
          <path d="M1 3h16v13H8l-3 4v-4H1z" fill="#fff" />
          <path d="M4 6.500h10M4 9.500h10M4 12.500h6" stroke="#1b2b41" strokeWidth="1.200" />
        </svg>
        <span className="absolute right-0 bottom-0 flex size-[18px] items-center justify-center rounded-full border border-[#8a8f96] bg-[#32363b] text-[10px] font-semibold">16</span>
      </button>
      <button type="button" aria-label="Show desktop" className="h-10 w-1 border-l border-[#5a6878]" />
    </div>
  </footer>
);

/* ---------- page ---------- */

export default function App() {
  return (
    <div className="relative flex h-screen flex-col overflow-hidden bg-white font-['Noto_Sans','Segoe_UI','Leelawadee_UI',sans-serif] text-[11px] leading-4 text-black">
      <header className="flex h-[23px] shrink-0 items-center pl-px text-[#8c8c8c]">
        <Folder />
        <span className="ml-1.5 h-4 w-px bg-[#999]" />
        <svg viewBox="0 0 14 16" className="ml-2.5 h-4 w-3.5" aria-hidden="true">
          <path d="M.5.500h9l4 4v11H.5z" fill="#fff" stroke="#777" />
          <path d="M9.500.5v4h4" fill="none" stroke="#777" />
          <path d="M3.500 8l2.700 3.200L11 5" fill="none" stroke="#d9602b" strokeWidth="1.800" />
        </svg>
        <span className="ml-[7px]"><Folder /></span>
        <svg viewBox="0 0 8 7" className="ml-[7px] h-[7px] w-2" aria-hidden="true"><path d="M0 0h8v1.200H0zM.5 3h7L4 6.500z" fill="#222" /></svg>
        <span className="ml-2 h-4 w-px bg-[#999]" />
        <h1 className="ml-[7px] flex-1"><Label text="พากเสียง และ VDO" /></h1>
        <div className="flex gap-[29px] pr-[18px]">
          <button type="button" aria-label="Minimize"><Minimize /></button>
          <button type="button" aria-label="Restore"><Restore /></button>
          <button type="button" aria-label="Close"><CloseX className="size-4" /></button>
        </div>
      </header>
      <nav className="flex h-6 shrink-0 items-center border-b border-[#dadbdc] text-[#3b3b3b]">
        <button type="button" className="h-full w-14 bg-[#0063b1] text-white">File</button>
        <button type="button" className="w-[58px]">Home</button>
        <button type="button" className="w-[58px]">Share</button>
        <button type="button" className="w-[54px]">View</button>
        <button type="button" aria-label="Expand the ribbon" className="ml-auto text-[#888]"><Stroke d="M4 6l4 4 4-4" w={1.300} /></button>
        <button type="button" aria-label="Help" className="mr-[3px] ml-1.5"><Help /></button>
      </nav>
      <AddressBar
        className="h-[34px] shrink-0"
        crumbs={["USB Drive (I:)", "คอร์สติ๊กต๊อก2026", "Sync Data", "โปรแกรม", "พากเสียง และ VDO"]}
        search="Search พากเสียง และ VDO"
        searchWidth="w-[306px]"
      />
      <div className="flex min-h-0 flex-1 overflow-hidden">
        <div className="flex w-[302px] border-r border-[#f5f5f5]">
          <div className="mt-px flex min-w-0 flex-1"><Tree items={explorerTree} label="Navigation pane" /></div>
          <div className="mr-0.5 flex w-4 flex-col justify-between bg-[#f0f0f0] text-[#505050]">
            <Stroke d="M4 10l4-4 4 4" w={2} className="size-4" />
            <ChevronDown className="size-4" />
          </div>
        </div>
        <div className="flex-1" />
      </div>
      <div className="flex h-[23px] shrink-0 items-center pr-[7px] pl-3.5 text-[#1e395b]">
        <span>4 items</span>
        <span className="ml-2.5 h-4 w-px bg-[#eee]" />
        <button type="button" aria-label="Details view" className="ml-auto"><DetailsView /></button>
        <button type="button" aria-label="Large icons view" className="ml-[5px]"><PictureIcon /></button>
      </div>
      <Taskbar />
      <AppWindow />
      <OpenDialog />
      <svg viewBox="0 0 13 20" className="pointer-events-none absolute top-[272px] left-[506px] h-5 w-[13px]" aria-hidden="true">
        <path d="M.7.900v15.200l3.600-3.300 2.500 5.800 2.500-1.100-2.500-5.600h5z" fill="#fff" stroke="#222" strokeWidth="1" />
      </svg>
    </div>
  );
}
